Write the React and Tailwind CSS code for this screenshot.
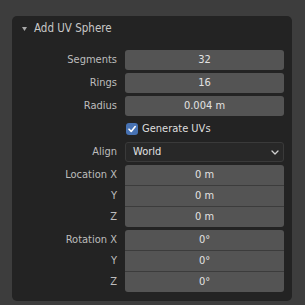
const font = { fontFamily: '"DejaVu Sans Condensed", "DejaVu Sans", sans-serif' };

function Field({ label, value }) {
  return (
    <div className="flex items-center h-[20px]">
      <div className="w-[113px] pr-[8px] text-right text-[#bdbdbd]">{label}</div>
      <div className="flex-1 h-full rounded-[3px] bg-[#545454] text-[#e2e2e2] flex items-center justify-center">
        {value}
      </div>
    </div>
  );
}

function Group({ label, values }) {
  return (
    <div className="flex flex-col">
      {values.map((v, i) => {
        const first = i === 0;
        const last = i === values.length - 1;
        return (
          <div key={i} className="flex items-stretch">
            <div
              className={
                "w-[113px] pr-[8px] text-right text-[#bdbdbd] flex items-center justify-end " +
                (first ? "h-[20px]" : "h-[21px] pt-[1px]")
              }
            >
              {first ? label + " X" : i === 1 ? "Y" : "Z"}
            </div>
            <div
              className={
                "flex-1 bg-[#545454] text-[#e2e2e2] flex items-center justify-center " +
                (first ? "h-[20px] rounded-t-[3px]" : "h-[21px] border-t border-[#3c3c3c]") +
                (last ? " rounded-b-[3px]" : "")
              }
            >
              {v}
            </div>
          </div>
        );
      })}
    </div>
  );
}

export default function App() {
  return (
    <div className="w-[305px] h-[305px] bg-[#3d3d3d] pt-[16px] pl-[12px]" style={font}>
      <div className="w-[280px] h-[285px] rounded-[5px] bg-[#232323] text-[11px]">
        <div className="h-[26px] flex items-center pl-[10px] text-[#c8c8c8] text-[11.5px]">
          <svg width="5" height="4" viewBox="0 0 5 4" className="mr-[7px]">
            <path d="M0 0 L5 0 L2.5 4 Z" fill="#a8a8a8" />
          </svg>
          Add UV Sphere
        </div>
        <div className="flex flex-col gap-[3px] pt-[8px] pr-[8px]">
          <Field label="Segments" value="32" />
          <Field label="Rings" value="16" />
          <Field label="Radius" value="0.004 m" />
          <div className="flex items-center h-[20px]">
            <div className="w-[113px]" />
            <div className="w-[12px] h-[12px] rounded-[3px] bg-[#4772b3] flex items-center justify-center ml-[1px]">
              <svg width="10" height="10" viewBox="0 0 10 10">
                <path d="M2 5.2 L4.2 7.4 L8.2 2.6" stroke="#ffffff" strokeWidth="1.6" fill="none" strokeLinecap="round" strokeLinejoin="round" />
              </svg>
            </div>
            <span className="ml-[4px] text-[#dedede]">Generate UVs</span>
          </div>
          <div className="flex items-center h-[20px]">
            <div className="w-[113px] pr-[8px] text-right text-[#bdbdbd]">Align</div>
            <div className="flex-1 h-full rounded-[3px] bg-[#282828] border border-[#3a3a3a] text-[#e2e2e2] flex items-center justify-between pl-[7px] pr-[4px]">
              <span>World</span>
              <svg width="8" height="5" viewBox="0 0 8 5">
                <path d="M1 1 L4 4 L7 1" stroke="#d0d0d0" strokeWidth="1.3" fill="none" strokeLinecap="round" strokeLinejoin="round" />
              </svg>
            </div>
          </div>
          <Group label="Location" values={["0 m", "0 m", "0 m"]} />
          <Group label="Rotation" values={["0°", "0°", "0°"]} />
        </div>
      </div>
    </div>
  );
}
